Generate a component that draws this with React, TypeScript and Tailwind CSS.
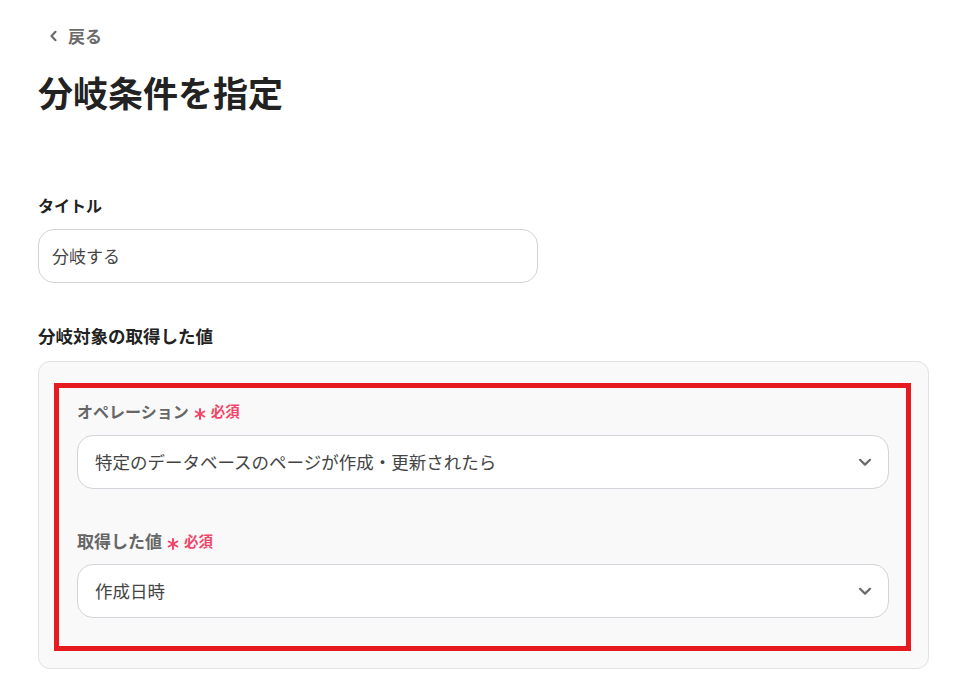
import React from "react";

const font = { fontFamily: '"Noto Sans CJK JP", "Noto Sans", sans-serif' };

function Chevron() {
  return (
    <svg width="16" height="16" viewBox="0 0 16 16" fill="none">
      <path d="M3 5.8 L8 10.6 L13 5.8" stroke="#6a6a6a" strokeWidth="2.2" strokeLinecap="round" strokeLinejoin="round" />
    </svg>
  );
}

function Required() {
  return (
    <span className="ml-[5px] flex items-center text-[#f0466a]">
      <svg width="12" height="12" viewBox="0 0 12 12" className="mt-[5px]">
        <g stroke="#f0466a" strokeWidth="2" strokeLinecap="round">
          <line x1="6" y1="1" x2="6" y2="11" />
          <line x1="1.7" y1="3.5" x2="10.3" y2="8.5" />
          <line x1="1.7" y1="8.5" x2="10.3" y2="3.5" />
        </g>
      </svg>
      <span className="ml-[5px] text-[14.5px] font-bold leading-[24px]">必須</span>
    </span>
  );
}

function Select({ value, size }: { value: string; size: string }) {
  return (
    <div className="h-[54px] rounded-[16px] border border-[#d3d3da] bg-white flex items-center justify-between pl-[17px] pr-[15px]">
      <span className={size + " text-[#444]"}>{value}</span>
      <Chevron />
    </div>
  );
}

export default function App() {
  return (
    <div style={font} className="min-h-[690px] bg-white pl-[38px] pr-[31px] text-[#222]">
      <div className="pt-[24px] flex items-center h-[48px] box-border">
        <svg width="14" height="14" viewBox="0 0 14 14" fill="none" className="ml-[9px]">
          <path d="M8.5 2.8 L4.5 7 L8.5 11.2" stroke="#6b6b6b" strokeWidth="2.2" strokeLinecap="round" strokeLinejoin="round" />
        </svg>
        <span className="ml-[7px] text-[17px] font-bold leading-[24px] text-[#6b6b6b]">戻る</span>
      </div>
      <h1 className="mt-[20px] text-[35px] font-bold leading-[48px] tracking-[0px] text-[#222]">分岐条件を指定</h1>
      <div className="mt-[77px] text-[16px] font-bold leading-[24px]">タイトル</div>
      <div className="mt-[12px] w-[500px] h-[54px] rounded-[16px] border border-[#d3d3da] bg-white flex items-center pl-[13px]">
        <span className="text-[17px] text-[#444]">分岐する</span>
      </div>
      <div className="mt-[41px] text-[17.5px] font-bold leading-[24px]">分岐対象の取得した値</div>
      <div className="mt-[13px] w-[891px] rounded-[12px] border border-[#e2e2e2] bg-[#f9f9f9] pt-[21px] pb-[17px] pl-[15px] pr-[17px]">
        <div className="border-[5px] border-[#e51b1f] pt-[11px] pb-[28px] pl-[18px] pr-[17px]">
          <div className="flex items-center h-[24px]">
            <span className="text-[16px] font-bold leading-[24px] text-[#666]">オペレーション</span>
            <Required />
          </div>
          <div className="mt-[12px]">
            <Select value="特定のデータベースのページが作成・更新されたら" size="text-[17.5px]" />
          </div>
          <div className="mt-[40px] flex items-center h-[24px]">
            <span className="text-[17px] font-bold leading-[24px] text-[#666]">取得した値</span>
            <Required />
          </div>
          <div className="mt-[11px]">
            <Select value="作成日時" size="text-[17.5px]" />
          </div>
        </div>
      </div>
    </div>
  );
}
